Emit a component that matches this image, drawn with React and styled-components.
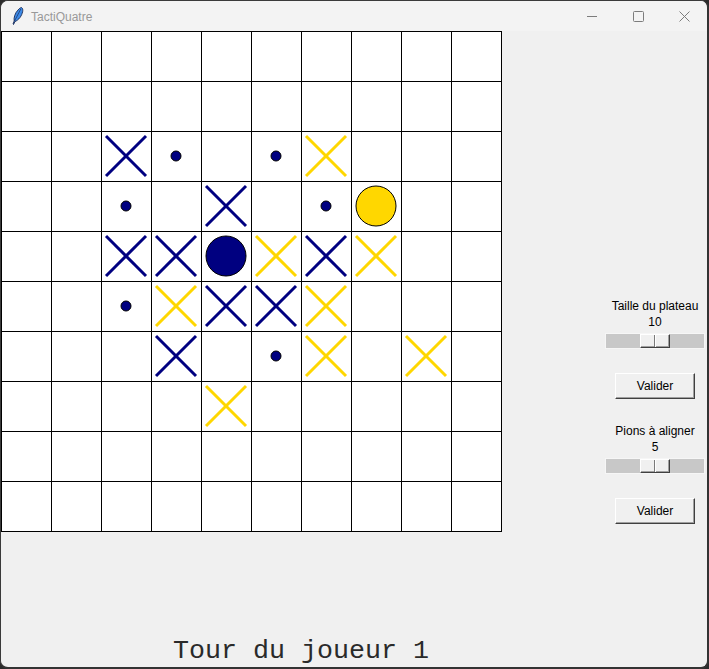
import React from "react"
import styled, { createGlobalStyle } from "styled-components"

const NAVY = "#000080"
const GOLD = "#ffd700"

// board marks: row -> [col, kind]
const marks = {
  2: [[2, "bx"], [3, "dot"], [5, "dot"], [6, "yx"]],
  3: [[2, "dot"], [4, "bx"], [6, "dot"], [7, "yo"]],
  4: [[2, "bx"], [3, "bx"], [4, "bo"], [5, "yx"], [6, "bx"], [7, "yx"]],
  5: [[2, "dot"], [3, "yx"], [4, "bx"], [5, "bx"], [6, "yx"]],
  6: [[3, "bx"], [5, "dot"], [6, "yx"], [8, "yx"]],
  7: [[4, "yx"]],
}

const Global = createGlobalStyle`
  html, body { margin: 0; padding: 0; background: #2b2b2b; }
  body { font-family: "Liberation Sans", Arial, sans-serif; }
`

const Mark = ({ kind }) => {
  if (!kind) return null
  let inner
  if (kind === "bx" || kind === "yx") {
    const c = kind === "bx" ? NAVY : GOLD
    inner = (
      <>
        <line x1="5" y1="5" x2="45" y2="45" stroke={c} strokeWidth="3" />
        <line x1="45" y1="5" x2="5" y2="45" stroke={c} strokeWidth="3" />
      </>
    )
  } else if (kind === "dot") {
    inner = <circle cx="25" cy="25" r="5" fill={NAVY} stroke="#000" strokeWidth="1" />
  } else {
    inner = <circle cx="25" cy="25" r="20" fill={kind === "bo" ? NAVY : GOLD} stroke="#000" strokeWidth="1" />
  }
  return (
    <MarkSvg width="49" height="49" viewBox="1 1 49 49">
      {inner}
    </MarkSvg>
  )
}

const Feather = () => (
  <svg width="16" height="18" viewBox="0 0 16 18">
    <path d="M11.5 0.5 C14 2 12.5 7 10 10.5 C8.5 12.5 6.5 14 5 14.5 L3.5 17.5 L3 17 L4.2 14 C3.5 11 5 6 8 3 C9.2 1.6 10.5 0.6 11.5 0.5 Z"
      fill="#3d8be8" stroke="#1b2a55" strokeWidth="0.9" />
    <path d="M10.8 2 L4.5 14" stroke="#1b2a55" strokeWidth="0.7" />
  </svg>
)

const Scale = ({ label, value, offset }) => (
  <Group>
    <Label>{label}</Label>
    <Label>{value}</Label>
    <Trough $offset={offset}>
      <Thumb />
    </Trough>
    <Button>Valider</Button>
  </Group>
)

const App = () => {
  const cells = []
  for (let r = 0; r < 10; r++) {
    for (let c = 0; c < 10; c++) {
      const m = (marks[r] || []).find((x) => x[0] === c)
      cells.push(
        <Cell key={`${r}-${c}`}>
          <Mark kind={m && m[1]} />
        </Cell>
      )
    }
  }

  return (
    <>
      <Global />
      <Window>
        <TitleBar>
          <Feather />
          <Title>TactiQuatre</Title>
          <Controls>
            <Ctrl>
              <svg width="10" height="10" viewBox="0 0 10 10">
                <line x1="0" y1="5.5" x2="10" y2="5.5" stroke="#7c7c7c" strokeWidth="1" />
              </svg>
            </Ctrl>
            <Ctrl>
              <svg width="11" height="11" viewBox="0 0 11 11">
                <rect x="0.5" y="0.5" width="10" height="10" rx="1" fill="none" stroke="#7c7c7c" strokeWidth="1" />
              </svg>
            </Ctrl>
            <Ctrl>
              <svg width="11" height="11" viewBox="0 0 11 11">
                <path d="M0.5 0.5 L10.5 10.5 M10.5 0.5 L0.5 10.5" stroke="#7c7c7c" strokeWidth="1" />
              </svg>
            </Ctrl>
          </Controls>
        </TitleBar>
        <Content>
          <Top>
            <Board>{cells}</Board>
            <Panel>
              <Scale label="Taille du plateau" value="10" offset={34} />
              <Scale label="Pions à aligner" value="5" offset={34} />
            </Panel>
          </Top>
          <Status>Tour du joueur 1</Status>
        </Content>
      </Window>
    </>
  )
}

const Window = styled.div`
  width: 709px;
  height: 669px;
  box-sizing: border-box;
  border-top: 1px solid #3a3a3a;
  border-left: 1px solid #3a3a3a;
  border-right: 2px solid #333;
  border-bottom: 2px solid #333;
  border-radius: 8px;
  overflow: hidden;
  background: #f0f0f0;
  display: flex;
  flex-direction: column;
`

const TitleBar = styled.div`
  height: 30px;
  flex: none;
  display: flex;
  align-items: center;
  background: #f3f3f3;
  padding-left: 9px;
  gap: 5px;
`

const Title = styled.span`
  font-family: "Liberation Sans", Arial, sans-serif;
  font-size: 12px;
  color: #999;
  margin-top: 1px;
`

const Controls = styled.div`
  margin-left: auto;
  display: flex;
  height: 100%;
`

const Ctrl = styled.div`
  width: 46px;
  height: 100%;
  display: flex;
  align-items: center;
  justify-content: center;
  svg { display: block; }
`

const Content = styled.div`
  flex: 1;
  display: flex;
  flex-direction: column;
`

const Top = styled.div`
  display: flex;
  align-items: flex-start;
`

const Board = styled.div`
  display: grid;
  grid-template-columns: repeat(10, 50px);
  grid-auto-rows: 50px;
  border-right: 1px solid #000;
  border-bottom: 1px solid #000;
  flex: none;
`

const Cell = styled.div`
  box-sizing: border-box;
  border-left: 1px solid #000;
  border-top: 1px solid #000;
  background: #fff;
`

const MarkSvg = styled.svg`
  display: block;
  overflow: visible;
`

const Panel = styled.div`
  margin-left: auto;
  width: 104px;
  padding-top: 267px;
  display: flex;
  flex-direction: column;
  align-items: center;
  gap: 24px;
`

const Group = styled.div`
  display: flex;
  flex-direction: column;
  align-items: center;
`

const Label = styled.div`
  font-family: "Liberation Sans", Arial, sans-serif;
  font-size: 12px;
  line-height: 16px;
  color: #000;
  white-space: nowrap;
`

const Trough = styled.div`
  width: 100px;
  height: 16px;
  margin-top: 3px;
  box-sizing: border-box;
  border: 1px solid #f6f6f6;
  background: #c8c8c8;
  display: flex;
  padding-left: ${(p) => p.$offset}px;
`

const Thumb = styled.div`
  width: 30px;
  height: 14px;
  box-sizing: border-box;
  background: #f0f0f0;
  border-top: 1px solid #fff;
  border-left: 1px solid #fff;
  border-right: 1px solid #404040;
  border-bottom: 1px solid #404040;
  box-shadow: inset -1px -1px 0 #a0a0a0;
  display: flex;
  &::after {
    content: "";
    margin-left: 13px;
    width: 1px;
    height: 100%;
    background: #7a7a7a;
    border-right: 1px solid #fff;
  }
`

const Button = styled.div`
  margin-top: 24px;
  width: 80px;
  height: 26px;
  box-sizing: border-box;
  background: #f0f0f0;
  border-top: 1px solid #fff;
  border-left: 1px solid #fff;
  border-right: 1px solid #404040;
  border-bottom: 1px solid #404040;
  box-shadow: inset -1px -1px 0 #a0a0a0;
  display: flex;
  align-items: center;
  justify-content: center;
  font-family: "Liberation Sans", Arial, sans-serif;
  font-size: 12px;
  color: #000;
`

const Status = styled.div`
  margin-top: auto;
  padding-left: 172px;
  padding-bottom: 1px;
  font-family: "Liberation Mono", "Courier New", monospace;
  font-size: 26.67px;
  line-height: 30px;
  color: #2a2a2a;
  white-space: nowrap;
`

export default App
